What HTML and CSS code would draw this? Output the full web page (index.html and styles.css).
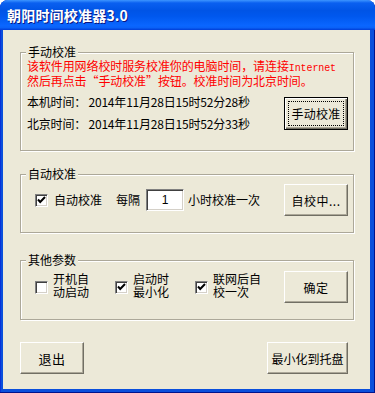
FILE: index.html
```html
<!DOCTYPE html>
<html lang="zh-CN">
<head>
<meta charset="utf-8">
<title>朝阳时间校准器3.0</title>
<link rel="stylesheet" href="styles.css">
</head>
<body>
<div class="window">
  <div class="titlebar"><span class="title">朝阳时间校准器3.0</span></div>
  <div class="client">
    <fieldset class="group g1">
      <legend>手动校准</legend>
      <p class="notice">该软件用网络校时服务校准你的电脑时间，请连接<span class="mono">Internet</span><br>然后再点击“手动校准”按钮。校准时间为北京时间。</p>
      <div class="manual-row">
        <div class="times">
          <div class="time-line">本机时间： 2014年11月28日15时52分28秒</div>
          <div class="time-line">北京时间： 2014年11月28日15时52分33秒</div>
        </div>
        <button class="btn default"><span class="focus">手动校准</span></button>
      </div>
    </fieldset>

    <fieldset class="group g2">
      <legend>自动校准</legend>
      <div class="auto-row">
        <span class="check checked"><svg viewBox="0 0 11 11" width="11" height="11"><path d="M2 4.5 L4.2 7 L9 2" fill="none" stroke="#000" stroke-width="2"/></svg></span>
        <span class="auto-label">自动校准</span>
        <span class="every">每隔</span>
        <span class="textbox">1</span>
        <span class="hours">小时校准一次</span>
        <button class="btn">自校中...</button>
      </div>
    </fieldset>

    <fieldset class="group g3">
      <legend>其他参数</legend>
      <div class="opt-row">
        <div class="opt">
          <span class="check"></span>
          <span class="opt-text">开机自<br>动启动</span>
        </div>
        <div class="opt">
          <span class="check checked"><svg viewBox="0 0 11 11" width="11" height="11"><path d="M2 4.5 L4.2 7 L9 2" fill="none" stroke="#000" stroke-width="2"/></svg></span>
          <span class="opt-text">启动时<br>最小化</span>
        </div>
        <div class="opt">
          <span class="check checked"><svg viewBox="0 0 11 11" width="11" height="11"><path d="M2 4.5 L4.2 7 L9 2" fill="none" stroke="#000" stroke-width="2"/></svg></span>
          <span class="opt-text">联网后自<br>校一次</span>
        </div>
        <button class="btn">确定</button>
      </div>
    </fieldset>

    <div class="bottom-row">
      <button class="btn exit">退出</button>
      <button class="btn tray">最小化到托盘</button>
    </div>
  </div>
</div>
</body>
</html>
```

FILE: styles.css
```css
html, body {
  margin: 0;
  padding: 0;
  background: #ffffff;
}

body {
  font-family: "Noto Sans CJK SC", "Liberation Sans", sans-serif;
  font-size: 12px;
  color: #000;
}

.window {
  width: 375px;
  height: 393px;
  display: flex;
  flex-direction: column;
  background: #0A4FDC;
  border-radius: 8px 8px 0 0;
  overflow: hidden;
  box-shadow: inset -1px -1px #00138c, inset 1px 0 #0831d9;
}

.titlebar {
  height: 30px;
  flex: none;
  display: flex;
  align-items: center;
  padding-left: 7px;
  box-sizing: border-box;
  background: linear-gradient(180deg, #3d95ff 0%, #0a60f0 10%, #0054e6 35%, #0058ee 55%, #0a66ff 85%, #0a62f8 92%, #003dd7 100%);
}

.title {
  color: #fff;
  font-weight: bold;
  font-size: 14px;
  line-height: 16px;
  text-shadow: 1px 1px 0 #0a1883;
  letter-spacing: 0.2px;
}

.client {
  flex: 1;
  margin: 0 5px 4px 3px;
  background: #ECE9D8;
  padding: 0 16px 0 17px;
  display: flex;
  flex-direction: column;
}

.group {
  margin: 0;
  padding: 0 5px 0 0;
  min-width: 0;
  border: 1px solid #ACA899;
  box-shadow: 1px 1px 0 #fff, inset 1px 1px 0 #fff;
}

.group legend {
  margin-left: 5px;
  padding: 0 2px;
  line-height: 14px;
  font-size: 12px;
  background: #ECE9D8;
}

.g1 { margin-top: 15px; padding-bottom: 20px; }
.g2 { margin-top: 16px; padding-top: 3px; padding-bottom: 16px; }
.g3 { margin-top: 20px; padding-top: 4px; padding-bottom: 16px; }

.notice {
  margin: 0;
  padding: 1px 0 0 6px;
  color: #ff0000;
  line-height: 12px;
  font-size: 12px;
  letter-spacing: -0.1px;
  white-space: nowrap;
}

.mono {
  font-family: "Liberation Mono", monospace;
  font-size: 10px;
}

.manual-row {
  margin-top: 9px;
  display: flex;
  align-items: flex-start;
}

.times {
  padding-left: 6px;
  display: flex;
  flex-direction: column;
  gap: 10px;
}

.time-line {
  line-height: 12px;
  white-space: nowrap;
  letter-spacing: -0.2px;
}

.btn {
  font-family: "Noto Sans CJK SC", sans-serif;
  font-size: 12px;
  color: #000;
  background: #ECE9D8;
  width: 64px;
  height: 32px;
  margin: 0;
  padding: 0;
  box-sizing: border-box;
  border: 1px solid;
  border-color: #fff #716F64 #716F64 #fff;
  box-shadow: inset -1px -1px 0 #ACA899;
  display: flex;
  align-items: center;
  justify-content: center;
  flex: none;
  margin-left: auto;
  letter-spacing: 0.5px;
}

.btn.default {
  height: 33px;
  margin-top: 1px;
  border-color: #000;
  box-shadow: inset 1px 1px 0 #fff, inset -1px -1px 0 #716F64, inset -2px -2px 0 #ACA899;
  padding: 3px;
}

.focus {
  flex: 1;
  align-self: stretch;
  display: flex;
  align-items: center;
  justify-content: center;
  border: 1px dotted #000;
  font-size: 12px;
  letter-spacing: 0.2px;
}

.auto-row {
  display: flex;
  align-items: center;
  padding-left: 14px;
}

.check {
  width: 13px;
  height: 13px;
  box-sizing: border-box;
  flex: none;
  background: #fff;
  border: 1px solid;
  border-color: #808080 #fff #fff #808080;
  box-shadow: inset 1px 1px 0 #404040, inset -1px -1px 0 #D4D0C8;
  display: flex;
  align-items: center;
  justify-content: center;
}

.check svg {
  display: block;
}

.auto-label {
  margin-left: 6px;
  line-height: 12px;
}

.every {
  margin-left: 14px;
  line-height: 12px;
}

.textbox {
  margin-left: 6px;
  width: 38px;
  height: 22px;
  box-sizing: border-box;
  background: #fff;
  border: 1px solid;
  border-color: #808080 #fff #fff #808080;
  box-shadow: inset 1px 1px 0 #404040, inset -1px -1px 0 #D4D0C8;
  display: flex;
  align-items: center;
  justify-content: center;
  font-family: "Liberation Sans", sans-serif;
  font-size: 12px;
}

.hours {
  margin-left: 4px;
  line-height: 12px;
}

.opt-row {
  display: flex;
  align-items: center;
  padding-left: 14px;
}

.opt {
  width: 80px;
  display: flex;
  align-items: center;
  gap: 5px;
}

.opt-text {
  font-size: 12px;
  line-height: 13px;
  margin-top: -4px;
}

.bottom-row {
  margin-top: 22px;
  display: flex;
  justify-content: space-between;
  padding-right: 6px;
}

.bottom-row .btn {
  margin-left: 0;
}

.btn.exit { width: 64px; font-size: 13px; }
.btn.tray { width: 81px; letter-spacing: 0; }
```
